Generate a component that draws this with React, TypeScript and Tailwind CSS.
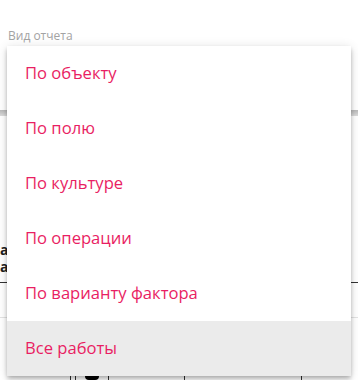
import React from "react";

const ITEMS = [
  "По объекту",
  "По полю",
  "По культуре",
  "По операции",
  "По варианту фактора",
  "Все работы",
];

export default function App() {
  const active = "Все работы";
  return (
    <div
      className="relative h-[380px] w-[358px] overflow-hidden bg-white"
      style={{ fontFamily: '"Open Sans", "Noto Sans", sans-serif' }}
    >
      {/* page behind the menu */}
      <div className="flex flex-col">
        <div className="px-2 pt-[28px] text-[12px] leading-[16px] text-[#a3a3a3]">Вид отчета</div>
        <div className="mt-[66px] h-[6px] bg-gradient-to-b from-[#b9b9b9] to-[#dcdcdc]" />
        <div className="mt-[117px] flex h-[50px] items-center justify-between border-b border-[#333] text-[14px] font-bold text-[#222]">
          <div className="flex flex-col">
            <span className="leading-[17px]">а</span>
            <span className="leading-[17px]">а</span>
          </div>
          <div className="flex w-[18px] flex-col">
            <span className="leading-[16px]">л</span>
            <span className="leading-[16px]">а</span>
            <span className="leading-[16px]">л</span>
          </div>
        </div>
        <div className="h-[35px] border-b border-[#e3e3e3]" />
        <div className="flex h-[62px]">
          <div className="w-[70px]" />
          <div className="w-[6px] border-x border-[#333]" />
          <div className="flex w-[33px] justify-center border-r border-[#333] pt-[52px]">
            <div className="h-[10px] w-[14px] rounded-sm bg-black" />
          </div>
          <div className="w-[76px] border-r border-[#333]" />
          <div className="w-[117px] border-r border-[#333]" />
        </div>
      </div>

      {/* dropdown menu */}
      <div className="absolute left-[7px] top-[46px] w-[344px] bg-white shadow-[0_2px_4px_-1px_rgba(0,0,0,0.2),0_4px_5px_0_rgba(0,0,0,0.14),0_1px_10px_0_rgba(0,0,0,0.12)]">
        {ITEMS.map((label) => (
          <div
            key={label}
            className={
              "flex h-[55px] items-center px-[18px] text-[16.6px] text-[#e91e63] " +
              (label === active ? "bg-[#ebebeb]" : "")
            }
          >
            {label}
          </div>
        ))}
      </div>
    </div>
  );
}
